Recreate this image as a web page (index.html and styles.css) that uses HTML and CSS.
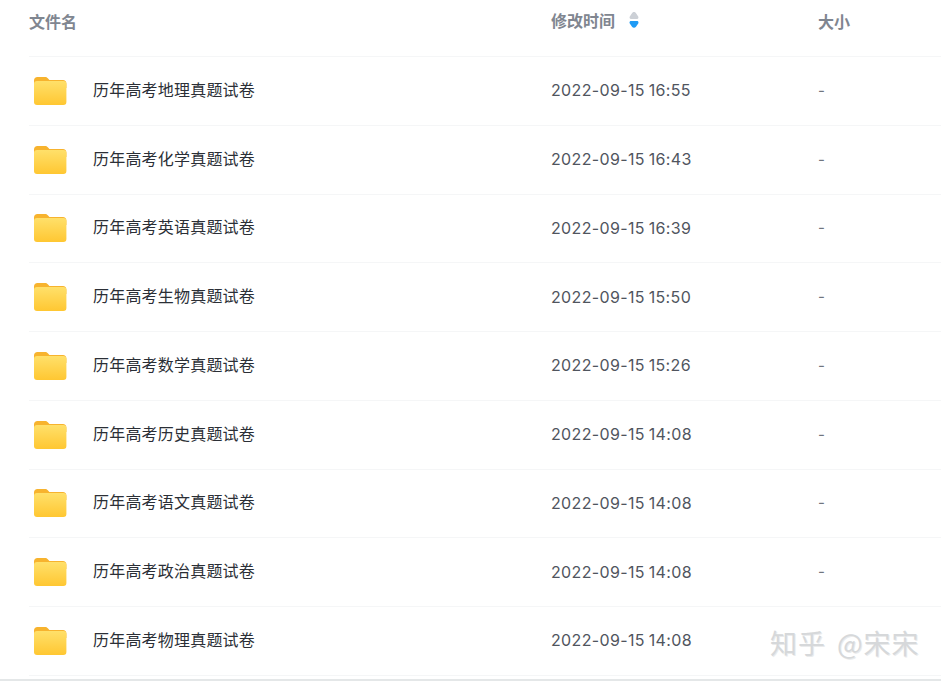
FILE: index.html
```html
<!DOCTYPE html>
<html lang="zh">
<head>
<meta charset="utf-8">
<title>文件列表</title>
<link rel="stylesheet" href="styles.css">
</head>
<body>
<svg class="defs" width="0" height="0" aria-hidden="true">
  <defs>
    <linearGradient id="folderFront" x1="0" y1="0" x2="0" y2="1">
      <stop offset="0" stop-color="#ffe06a"/>
      <stop offset="1" stop-color="#ffc732"/>
    </linearGradient>
    <symbol id="folder" viewBox="0 0 34 30">
      <path d="M1 4.500C1 2.500 2.400 1 4.400 1H12c1.200 0 2 .5 2.800 1.300L16.400 4H30c1.900 0 3.400 1.500 3.400 3.400V12H1z" fill="#f7b32e"/>
      <rect x="1" y="5" width="32.400" height="24" rx="3" fill="url(#folderFront)"/>
    </symbol>
  </defs>
</svg>
<main class="table">
  <header class="row head">
    <div class="name-cell">文件名</div>
    <div class="time-cell">修改时间
      <svg class="sort" width="10" height="16" viewBox="0 0 10 16" aria-hidden="true">
        <path d="M5 0C6 0 6.600 .6 7.200 1.400L9.200 4.600C9.800 5.600 9.400 7 8 7H2C.6 7 .2 5.600 .8 4.600L2.800 1.400C3.400 .6 4 0 5 0z" fill="#ccd0d6"/>
        <path d="M2 9H8C9.400 9 9.800 10.400 9.200 11.400L7 14.800C6 16.200 4 16.200 3 14.800L.8 11.400C.2 10.400 .6 9 2 9z" fill="#1f9bf5"/>
      </svg>
    </div>
    <div class="size-cell">大小</div>
  </header>
  <div class="row item"><div class="name-cell"><svg class="folder"><use href="#folder"/></svg><span>历年高考地理真题试卷</span></div><div class="time-cell">2022-09-15 16:55</div><div class="size-cell">-</div></div>
  <div class="row item"><div class="name-cell"><svg class="folder"><use href="#folder"/></svg><span>历年高考化学真题试卷</span></div><div class="time-cell">2022-09-15 16:43</div><div class="size-cell">-</div></div>
  <div class="row item"><div class="name-cell"><svg class="folder"><use href="#folder"/></svg><span>历年高考英语真题试卷</span></div><div class="time-cell">2022-09-15 16:39</div><div class="size-cell">-</div></div>
  <div class="row item"><div class="name-cell"><svg class="folder"><use href="#folder"/></svg><span>历年高考生物真题试卷</span></div><div class="time-cell">2022-09-15 15:50</div><div class="size-cell">-</div></div>
  <div class="row item"><div class="name-cell"><svg class="folder"><use href="#folder"/></svg><span>历年高考数学真题试卷</span></div><div class="time-cell">2022-09-15 15:26</div><div class="size-cell">-</div></div>
  <div class="row item"><div class="name-cell"><svg class="folder"><use href="#folder"/></svg><span>历年高考历史真题试卷</span></div><div class="time-cell">2022-09-15 14:08</div><div class="size-cell">-</div></div>
  <div class="row item"><div class="name-cell"><svg class="folder"><use href="#folder"/></svg><span>历年高考语文真题试卷</span></div><div class="time-cell">2022-09-15 14:08</div><div class="size-cell">-</div></div>
  <div class="row item"><div class="name-cell"><svg class="folder"><use href="#folder"/></svg><span>历年高考政治真题试卷</span></div><div class="time-cell">2022-09-15 14:08</div><div class="size-cell">-</div></div>
  <div class="row item"><div class="name-cell"><svg class="folder"><use href="#folder"/></svg><span>历年高考物理真题试卷</span></div><div class="time-cell">2022-09-15 14:08</div><div class="size-cell"></div></div>
</main>
<div class="watermark">知乎 @宋宋</div>
<div class="bottom-bar"></div>
</body>
</html>
```
FILE: styles.css
```css
* { box-sizing: border-box; }
html, body { margin: 0; height: 100%; }
body {
  position: relative;
  width: 941px;
  height: 681px;
  overflow: hidden;
  background: #fff;
  font-family: "Inter", "Noto Sans CJK SC", sans-serif;
}
.defs { position: absolute; }
.table { margin-left: 29px; }
.row {
  display: grid;
  grid-template-columns: 522px 267px 1fr;
  align-items: center;
  border-bottom: 1px solid #f5f6f7;
}
.head {
  height: 57px;
  padding-bottom: 14px;
  font-family: "Noto Sans CJK SC", sans-serif;
  font-size: 16px;
  font-weight: 700;
  color: #808690;
}
.item { height: 68.75px; }
.name-cell {
  display: flex;
  align-items: center;
  gap: 26px;
  font-family: "Noto Sans CJK SC", sans-serif;
  font-size: 16px;
  color: #2b2f36;
}
.head .name-cell { color: #808690; }
.name-cell span {
  letter-spacing: .2px;
  position: relative;
  top: -2px;
}
.folder {
  width: 34px;
  height: 30px;
  margin-left: 4px;
  flex: none;
}
.time-cell {
  display: flex;
  align-items: center;
  gap: 14px;
  padding-bottom: 1px;
  font-size: 16px;
  letter-spacing: .35px;
  word-spacing: -1px;
  color: #50555e;
}
.head .time-cell {
  font-size: 16px;
  letter-spacing: 0;
  word-spacing: 0;
  color: #808690;
  padding-bottom: 0;
  position: relative;
  top: -1px;
}
.size-cell { font-size: 15px; padding-bottom: 1px; color: #70757e; }
.head .size-cell { font-size: 16px; padding-bottom: 0; color: #808690; }
.sort { flex: none; }
.watermark {
  position: absolute;
  left: 770px;
  top: 624px;
  font-family: "Noto Sans CJK SC", sans-serif;
  font-size: 27px;
  line-height: 38px;
  word-spacing: 4px;
  letter-spacing: 1px;
  color: #d6d8da;
  text-shadow: 1px 1px 0 #eaebec;
}
.bottom-bar {
  position: absolute;
  left: 0;
  right: 0;
  bottom: 0;
  height: 2px;
  background: #e4e7e8;
}
```
